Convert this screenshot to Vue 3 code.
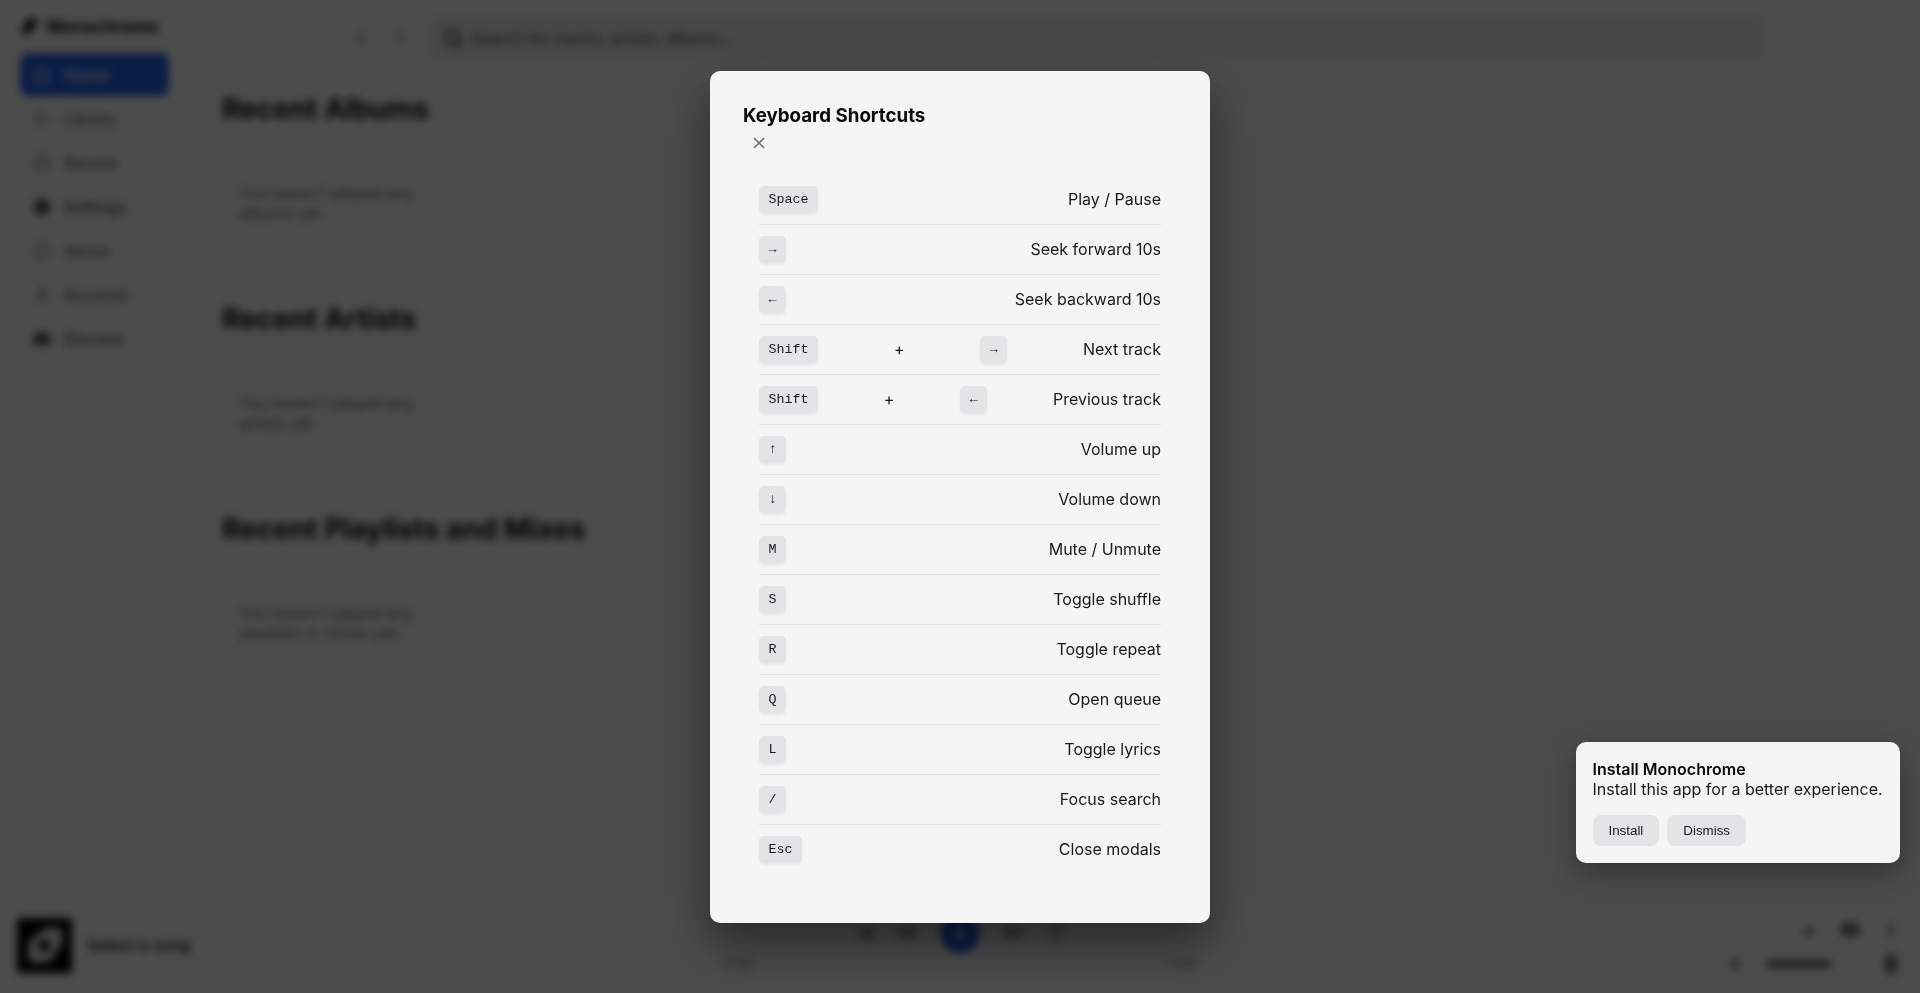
<template>
  <div class="app">
    <div class="top">
      <aside class="sidebar">
        <div class="logo">
          <svg class="logo-icon" viewBox="0 0 24 24"><path d="M3 21 L8 8 Q13 2 21 2 L22 5 Q20 13 14 18 Q8 22 3 21 Z" /></svg>
          <span>Monochrome</span>
        </div>
        <nav class="nav">
          <a v-for="item in navItems" :key="item.label" class="nav-item" :class="{ active: item.active, solid: item.solid }">
            <svg class="nav-icon" viewBox="0 0 24 24"><path :d="item.icon" /></svg>
            <span>{{ item.label }}</span>
          </a>
        </nav>
      </aside>

      <main class="main">
        <header class="header">
          <svg class="arrow" viewBox="0 0 24 24"><path d="M15 5l-7 7 7 7" /></svg>
          <svg class="arrow" viewBox="0 0 24 24"><path d="M9 5l7 7-7 7" /></svg>
          <div class="search">
            <svg class="search-icon" viewBox="0 0 24 24"><circle cx="11" cy="11" r="7" /><path d="M21 21l-5-5" /></svg>
            <span>Search for tracks, artists, albums...</span>
          </div>
        </header>

        <section v-for="section in sections" :key="section.title" class="section">
          <h2>{{ section.title }}</h2>
          <p>{{ section.empty }}</p>
        </section>
      </main>
    </div>

    <footer class="player">
      <div class="now-playing">
        <svg class="cover" viewBox="0 0 56 56">
          <rect width="56" height="56" rx="3" fill="#000" />
          <path d="M14 22 L30 10 H44 Q46 12 46 26 L34 44 Q20 46 12 44 Q10 30 14 22 Z" fill="#e8e8e8" />
          <circle cx="28" cy="28" r="6" fill="#000" />
        </svg>
        <span>Select a song</span>
      </div>
      <div class="center">
        <div class="controls">
          <svg class="ctl" viewBox="0 0 24 24"><path d="M3 8h4l10 10h4M3 18h4l10-10h4" /></svg>
          <svg class="ctl" viewBox="0 0 24 24"><path d="M19 5v14L8 12zM5 5v14" /></svg>
          <div class="play"><svg viewBox="0 0 24 24"><path d="M8 5v14l11-7z" /></svg></div>
          <svg class="ctl" viewBox="0 0 24 24"><path d="M5 5v14l11-7zM19 5v14" /></svg>
          <svg class="ctl repeat" viewBox="0 0 24 24"><path d="M4 11V9a3 3 0 0 1 3-3h13M4 14v2a3 3 0 0 0 3 3h13" /></svg>
        </div>
        <div class="progress">
          <span>0:00</span>
          <span>0:00</span>
        </div>
      </div>
      <div class="tools">
        <div class="tool-row">
          <svg class="tool" viewBox="0 0 24 24"><path d="M12 5l7 13H5z" /></svg>
          <svg class="tool wide" viewBox="0 0 24 24"><path d="M3 5h18v13H3z" /></svg>
          <svg class="tool" viewBox="0 0 24 24"><path d="M10 4h4v16h-4z" /></svg>
        </div>
        <div class="tool-row volume">
          <svg class="tool" viewBox="0 0 24 24"><path d="M3 9v6h5l6 5V4L8 9z" /></svg>
          <div class="volume-bar"></div>
          <svg class="tool last" viewBox="0 0 24 24"><path d="M6 3h12v18H6z" /></svg>
        </div>
      </div>
    </footer>

    <div class="overlay">
      <div class="modal">
        <h3>Keyboard Shortcuts</h3>
        <button class="close" aria-label="Close">
          <svg viewBox="0 0 24 24"><path d="M6 6l12 12M18 6L6 18" /></svg>
        </button>
        <ul class="shortcuts">
          <li v-for="row in shortcuts" :key="row.label">
            <template v-for="(key, idx) in row.keys" :key="key">
              <span v-if="idx > 0" class="plus">+</span>
              <kbd>{{ key }}</kbd>
            </template>
            <span class="desc">{{ row.label }}</span>
          </li>
        </ul>
      </div>
    </div>

    <div class="install">
      <strong>Install Monochrome</strong>
      <p>Install this app for a better experience.</p>
      <div class="install-actions">
        <button>Install</button>
        <button>Dismiss</button>
      </div>
    </div>
  </div>
</template>

<script setup>
const navItems = [
  { label: "Home", active: true, icon: "M4 11l8-7 8 7v9H4z" },
  { label: "Library", icon: "M5 5v14M10 5v14M15 5l4 14" },
  { label: "Recent", icon: "M12 3a9 9 0 1 0 0 18 9 9 0 0 0 0-18zM12 7v5l3 3" },
  { label: "Settings", solid: true, icon: "M12 3a9 9 0 1 0 0 18 9 9 0 0 0 0-18z" },
  { label: "About", icon: "M12 3a9 9 0 1 0 0 18 9 9 0 0 0 0-18zM12 11v5M12 8v.5" },
  { label: "Account", icon: "M12 4a4 4 0 1 0 0 8 4 4 0 0 0 0-8zM5 21a7 7 0 0 1 14 0" },
  { label: "Discord", solid: true, icon: "M4 7q8-4 16 0l2 11-5 2-1-3H8l-1 3-5-2z" },
];

const sections = [
  { title: "Recent Albums", empty: "You haven't played any albums yet." },
  { title: "Recent Artists", empty: "You haven't played any artists yet." },
  { title: "Recent Playlists and Mixes", empty: "You haven't played any playlists or mixes yet." },
];

const shortcuts = [
  { keys: ["Space"], label: "Play / Pause" },
  { keys: ["→"], label: "Seek forward 10s" },
  { keys: ["←"], label: "Seek backward 10s" },
  { keys: ["Shift", "→"], label: "Next track" },
  { keys: ["Shift", "←"], label: "Previous track" },
  { keys: ["↑"], label: "Volume up" },
  { keys: ["↓"], label: "Volume down" },
  { keys: ["M"], label: "Mute / Unmute" },
  { keys: ["S"], label: "Toggle shuffle" },
  { keys: ["R"], label: "Toggle repeat" },
  { keys: ["Q"], label: "Open queue" },
  { keys: ["L"], label: "Toggle lyrics" },
  { keys: ["/"], label: "Focus search" },
  { keys: ["Esc"], label: "Close modals" },
];
</script>

<style>
html,
body {
  margin: 0;
  background: #fff;
  overflow: hidden;
}
</style>

<style scoped>
.app {
  height: 100vh;
  display: flex;
  flex-direction: column;
  font-family: Inter, "Liberation Sans", sans-serif;
  color: #09090b;
  background: #fff;
}

.top {
  flex: 1;
  display: flex;
  min-height: 0;
}

.sidebar {
  width: 190px;
  flex-shrink: 0;
  padding: 15px 20px;
  box-sizing: border-box;
}

.logo {
  display: flex;
  align-items: center;
  gap: 8px;
  margin-left: -2px;
  height: 22px;
  font-size: 17.2px;
  font-weight: 700;
}

.logo-icon {
  width: 21px;
  height: 21px;
  fill: #09090b;
}

.nav {
  margin-top: 16px;
  display: flex;
  flex-direction: column;
  gap: 1px;
}

.nav-item {
  height: 43px;
  width: 149px;
  border-radius: 8px;
  display: flex;
  align-items: center;
  gap: 12px;
  padding-left: 12px;
  box-sizing: border-box;
  font-size: 16px;
  font-weight: 500;
  color: #71717a;
}

.nav-item.active {
  background: #2563eb;
  color: #fff;
}

.nav-icon {
  width: 20px;
  height: 20px;
  fill: none;
  stroke: currentColor;
  stroke-width: 2;
}

.nav-item.solid {
  color: #52525b;
}

.nav-item.solid .nav-icon {
  fill: currentColor;
}

.main {
  flex: 1;
  padding: 16px 156px 0 32px;
  min-width: 0;
}

.header {
  display: flex;
  align-items: center;
  height: 43px;
  padding-left: 129px;
}

.arrow {
  width: 22px;
  height: 22px;
  margin-right: 16px;
  fill: none;
  stroke: #71717a;
  stroke-width: 2;
}

.search {
  flex: 1;
  height: 43px;
  margin-left: 3px;
  background: #eeeeef;
  border-radius: 8px;
  box-sizing: border-box;
  display: flex;
  align-items: center;
  gap: 6px;
  padding-left: 11px;
  font-size: 16px;
  color: #52525b;
}

.search-icon {
  width: 24px;
  height: 24px;
  fill: none;
  stroke: #3f3f46;
  stroke-width: 2.5;
}

.section {
  height: 210px;
}

.section h2 {
  margin: 0;
  padding-top: 33px;
  font-size: 28px;
  line-height: 34px;
  font-weight: 700;
}

.section p {
  margin: 0;
  padding: 57px 0 0 17px;
  width: 200px;
  font-size: 16px;
  line-height: 20px;
  color: #71717a;
}

.player {
  height: 88px;
  flex-shrink: 0;
  display: grid;
  grid-template-columns: 1fr 480px 1fr;
  box-sizing: border-box;
}

.now-playing {
  display: flex;
  align-items: center;
  gap: 15px;
  padding: 0 0 8px 17px;
  font-size: 16px;
  font-weight: 500;
}

.cover {
  width: 55px;
  height: 55px;
}

.center {
  display: flex;
  flex-direction: column;
  align-items: center;
  padding-top: 8px;
}

.controls {
  display: flex;
  align-items: center;
  gap: 20px;
  height: 40px;
  margin-left: 4px;
}

.ctl {
  width: 22px;
  height: 22px;
  margin: 0 -1px;
  fill: none;
  stroke: #3f3f46;
  stroke-width: 2;
}

.ctl.repeat {
  margin-left: 4px;
}

.play {
  width: 40px;
  height: 40px;
  margin: 0 3px;
  border-radius: 50%;
  background: #2563eb;
  display: flex;
  align-items: center;
  justify-content: center;
}

.play svg {
  width: 20px;
  height: 20px;
  fill: #fff;
}

.progress {
  width: 100%;
  box-sizing: border-box;
  padding: 0 3px 0 4px;
  margin-top: 3px;
  display: flex;
  justify-content: space-between;
  font-size: 13px;
  color: #71717a;
}

.tools {
  display: flex;
  flex-direction: column;
  align-items: flex-end;
  padding: 13px 19px 0 0;
  gap: 10px;
}

.tool-row {
  display: flex;
  align-items: center;
  gap: 21px;
}

.tool {
  width: 20px;
  height: 20px;
  fill: #71717a;
}

.tool.wide {
  width: 24px;
  height: 24px;
  margin: 0 -2px;
}

.tool.last {
  width: 24px;
  height: 24px;
  margin-right: -2px;
}

.volume-bar {
  width: 66px;
  height: 6px;
  border-radius: 3px;
  background: #3f3f46;
  margin: 0 26px 0 -2px;
}

.overlay {
  position: fixed;
  inset: 0;
  display: flex;
  align-items: center;
  justify-content: center;
  background: rgba(0, 0, 0, 0.7);
  backdrop-filter: blur(4px);
}

.modal {
  width: 500px;
  height: 852px;
  box-sizing: border-box;
  padding: 33px 32px 0 33px;
  background: #f5f5f5;
  border-radius: 10px;
  box-shadow: 0 20px 50px rgba(0, 0, 0, 0.5);
  color: #18181b;
}

.modal h3 {
  margin: 0;
  font-size: 18.72px;
  line-height: 24px;
  font-weight: 700;
  color: #09090b;
}

.close {
  display: block;
  margin: -1px 0 0;
  padding: 0;
  width: 32px;
  height: 32px;
  border: 0;
  background: none;
}

.close svg {
  display: block;
  width: 20px;
  height: 20px;
  margin: 0 auto;
  fill: none;
  stroke: #71717a;
  stroke-width: 2;
}

.shortcuts {
  list-style: none;
  margin: 16px 0 0;
  padding: 0 17px 0 16px;
}

.shortcuts li {
  display: flex;
  align-items: center;
  justify-content: space-between;
  height: 50px;
  box-sizing: border-box;
  border-bottom: 1px solid #e4e4e7;
  font-size: 16px;
}

.shortcuts li:last-child {
  border-bottom-color: transparent;
}

kbd {
  font-family: "Liberation Mono", monospace;
  font-size: 13.33px;
  line-height: 15px;
  padding: 6px 9.6px;
  background: #e4e4e7;
  border-radius: 5px;
  box-shadow: 0 2px 3px rgba(0, 0, 0, 0.06);
  color: #18181b;
}

.install {
  position: fixed;
  right: 20px;
  bottom: 130px;
  width: 324px;
  height: 121px;
  box-sizing: border-box;
  padding: 17px 16px 16px 16.5px;
  background: #f5f5f5;
  border-radius: 10px;
  box-shadow: 0 10px 30px rgba(0, 0, 0, 0.35);
  font-size: 16px;
  line-height: 20px;
  color: #18181b;
}

.install strong {
  display: block;
  font-weight: 600;
  color: #09090b;
}

.install p {
  margin: 0;
}

.install-actions {
  display: flex;
  gap: 8px;
  margin-top: 16px;
}

.install-actions button {
  height: 31px;
  padding: 0 16px;
  border: 0;
  border-radius: 8px;
  background: #e4e4e7;
  font-family: "Liberation Sans", sans-serif;
  font-size: 13.33px;
  color: #18181b;
}
</style>
